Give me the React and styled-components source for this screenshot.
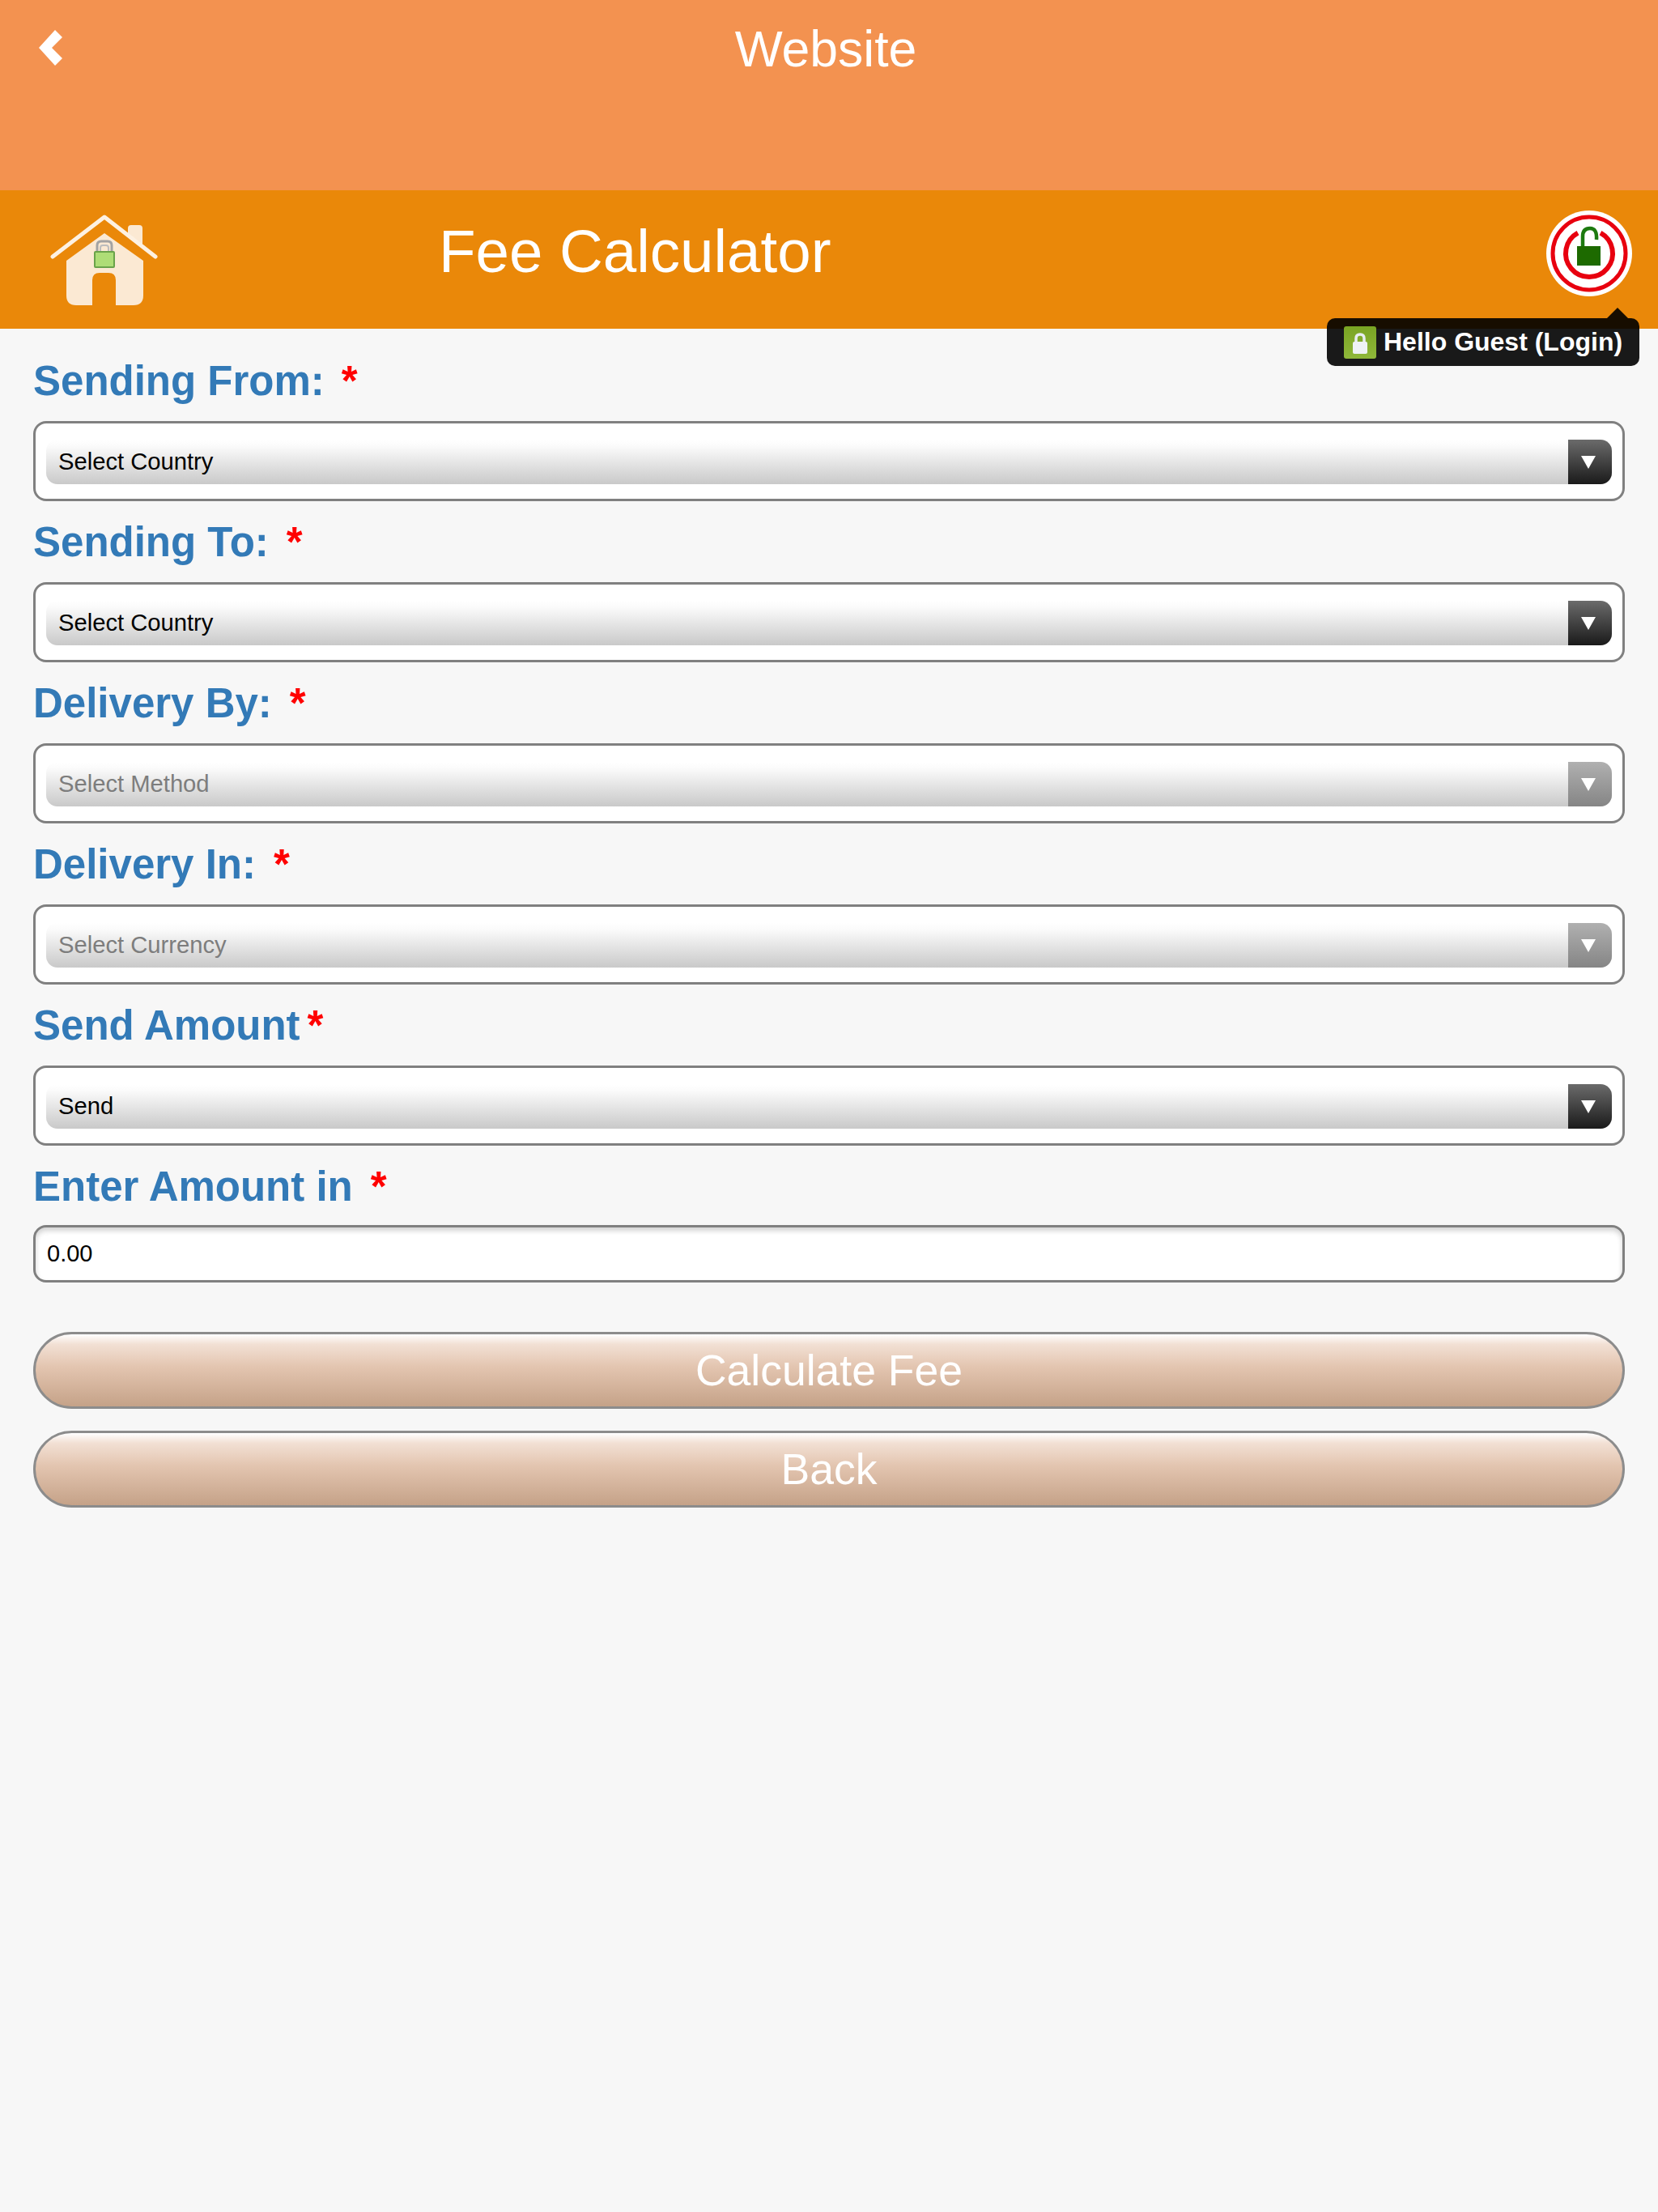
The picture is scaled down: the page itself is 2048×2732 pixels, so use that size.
import React from "react";
import styled, { createGlobalStyle } from "styled-components";

const GlobalStyle = createGlobalStyle`
  html, body {
    margin: 0;
    padding: 0;
    background: #f7f7f7;
  }
  body {
    font-family: "Liberation Sans", Arial, sans-serif;
  }
`;

const Page = styled.div`
  width: 2048px;
  min-height: 2732px;
  background: #f7f7f7;
  position: relative;
`;

const TopBar = styled.header`
  height: 235px;
  background: #f39250;
  display: flex;
  justify-content: center;
  position: relative;
  box-sizing: border-box;
  padding: 26px 8px 0 0;
`;

const BackButton = styled.svg`
  position: absolute;
  left: 48px;
  top: 37px;
  width: 30px;
  height: 44px;
`;

const SiteTitle = styled.div`
  font-size: 62.5px;
  line-height: 68px;
  color: #fff;
`;

const SubBar = styled.div`
  height: 171px;
  background: #ea8809;
  display: flex;
  align-items: flex-start;
  position: relative;
`;

const HomeIcon = styled.svg`
  width: 136px;
  height: 114px;
  margin: 30px 0 0 61px;
  flex: none;
`;

const PageTitle = styled.h1`
  margin: 0 0 0 345px;
  font-size: 74.5px;
  font-weight: normal;
  line-height: 86px;
  padding-top: 33px;
  color: #fff;
`;

const PowerIcon = styled.svg`
  position: absolute;
  left: 1909px;
  top: 24px;
  width: 108px;
  height: 108px;
`;

const Tooltip = styled.div`
  position: absolute;
  left: 1639px;
  top: 393px;
  width: 386px;
  height: 59px;
  box-sizing: border-box;
  padding-left: 21px;
  background: rgba(0, 0, 0, 0.9);
  border-radius: 10px;
  display: flex;
  align-items: center;
  gap: 9px;
  color: #fff;
  font-size: 32px;
  font-weight: bold;
  white-space: nowrap;

  &::before {
    content: "";
    position: absolute;
    right: 14px;
    top: -13px;
    border-left: 13px solid transparent;
    border-right: 13px solid transparent;
    border-bottom: 13px solid rgba(0, 0, 0, 0.9);
  }
`;

const TipLock = styled.svg`
  width: 40px;
  height: 40px;
  flex: none;
`;

const Form = styled.main`
  padding: 33px 41px 0;
`;

const Label = styled.label`
  display: block;
  height: 81px;
  line-height: 64px;
  font-size: 51px;
  font-weight: bold;
  color: #337ab7;
  white-space: pre;
`;

const Star = styled.span`
  color: #f00;
  margin-left: ${(p) => p.$gap}px;
`;

const SelectBox = styled.div`
  box-sizing: border-box;
  height: 99px;
  margin-bottom: 19px;
  padding: 20px 13px 18px;
  background: #fff;
  border: 3px solid #808080;
  border-radius: 16px;
`;

const SelectInner = styled.div`
  height: 55px;
  display: flex;
  align-items: center;
  justify-content: space-between;
  border-radius: 14px;
  background: linear-gradient(#fff 0%, #fbfbfb 14%, #c9c9c9 100%);
  overflow: hidden;
`;

const SelectText = styled.span`
  padding-left: 15px;
  font-size: 29.2px;
  color: ${(p) => (p.$disabled ? "#7d7d7d" : "#000")};
`;

const Arrow = styled.span`
  box-sizing: border-box;
  width: 54px;
  height: 100%;
  padding-right: 4px;
  flex: none;
  display: flex;
  align-items: center;
  justify-content: center;
  background: ${(p) =>
    p.$disabled
      ? "linear-gradient(#b0b0b0, #858585)"
      : "linear-gradient(#6b6b6b, #1a1a1a)"};

  &::after {
    content: "";
    border-left: 9px solid transparent;
    border-right: 9px solid transparent;
    border-top: 16px solid #fff;
  }
`;

const AmountInput = styled.div`
  box-sizing: border-box;
  height: 71px;
  margin: -2px 0 61px;
  padding-left: 14px;
  display: flex;
  align-items: center;
  font-size: 29px;
  color: #000;
  background: #fff;
  border: 3px solid #808080;
  border-radius: 16px;
  box-shadow: inset 0 4px 6px rgba(0, 0, 0, 0.18);
`;

const PillButton = styled.button`
  display: block;
  box-sizing: border-box;
  width: 100%;
  height: 95px;
  margin-bottom: 27px;
  padding: 0;
  font-family: inherit;
  font-size: 53.5px;
  color: #fff;
  border: 3px solid #8c8c8c;
  border-radius: 48px;
  background: linear-gradient(#fff 0%, #f2e0d4 14%, #e3c5b0 45%, #c5a288 100%);
`;

const fields = [
  { label: "Sending From:", gap: 21, value: "Select Country" },
  { label: "Sending To:", gap: 22, value: "Select Country" },
  { label: "Delivery By:", gap: 22, value: "Select Method", disabled: true },
  { label: "Delivery In:", gap: 22, value: "Select Currency", disabled: true },
  { label: "Send Amount", gap: 9, value: "Send" },
];

export default function App() {
  return (
    <Page>
      <GlobalStyle />
      <TopBar>
        <BackButton viewBox="0 0 30 44">
          <path d="M20 0 L29 9 L16 22 L29 35 L20 44 L0 22 Z" fill="#fff" />
        </BackButton>
        <SiteTitle>Website</SiteTitle>
      </TopBar>
      <SubBar>
        <HomeIcon viewBox="61 265 136 114">
          <path d="M158 291 V282 Q158 278 162 278 H172 Q176 278 176 282 V304 Z" fill="#fbe9d3" />
          <path
            d="M65 317 L129 268 L192 317"
            fill="none"
            stroke="#fdf1e2"
            strokeWidth="5"
            strokeLinecap="round"
            strokeLinejoin="round"
          />
          <path
            d="M82 322 L129 288 L177 322 V365 Q177 377 165 377 H143 V346 Q143 337 134 337 H123 Q114 337 114 346 V377 H94 Q82 377 82 365 Z"
            fill="#fbe9d3"
          />
          <path
            d="M120 311 V303 Q120 298 125 298 H133 Q138 298 138 303 V311"
            fill="none"
            stroke="#a3a3a3"
            strokeWidth="3"
          />
          <path
            d="M124 311 V306 Q124 303 127 303 H131 Q134 303 134 306 V311"
            fill="none"
            stroke="#bdbdbd"
            strokeWidth="2"
          />
          <rect x="117" y="311" width="24" height="19" rx="1" fill="#aedd76" stroke="#6aa34a" strokeWidth="2" />
        </HomeIcon>
        <PageTitle>Fee Calculator</PageTitle>
        <PowerIcon viewBox="0 0 108 108">
          <circle cx="54" cy="54" r="53" fill="#fff" />
          <circle cx="54" cy="54" r="45" fill="none" stroke="#e8000f" strokeWidth="5" />
          <path
            d="M40 28.6 A29 29 0 1 0 68 28.6"
            fill="none"
            stroke="#e8000f"
            strokeWidth="6"
          />
          <rect x="39" y="45" width="29" height="24" fill="#1d6a00" />
          <path
            d="M46 45 V33 Q46 23 55 23 Q64 23 63 37"
            fill="none"
            stroke="#1d7a10"
            strokeWidth="4.5"
          />
        </PowerIcon>
      </SubBar>
      <Tooltip>
        <TipLock viewBox="0 0 40 40">
          <defs>
            <linearGradient id="tipGreen" x1="0" y1="0" x2="0" y2="1">
              <stop offset="0" stopColor="#7aa423" />
              <stop offset="1" stopColor="#8fb83a" />
            </linearGradient>
          </defs>
          <rect width="40" height="40" rx="3" fill="url(#tipGreen)" />
          <path d="M15 20 V15 Q15 10 20 10 Q25 10 25 15 V20" fill="none" stroke="#e8edf0" strokeWidth="3.5" />
          <rect x="11" y="19" width="18" height="15" rx="2" fill="#eef2f5" />
        </TipLock>
        Hello Guest (Login)
      </Tooltip>
      <Form>
        {fields.map((f) => (
          <div key={f.label}>
            <Label>
              {f.label}
              <Star $gap={f.gap}>*</Star>
            </Label>
            <SelectBox>
              <SelectInner>
                <SelectText $disabled={f.disabled}>{f.value}</SelectText>
                <Arrow $disabled={f.disabled} />
              </SelectInner>
            </SelectBox>
          </div>
        ))}
        <div>
          <Label>
            Enter Amount in
            <Star $gap={22}>*</Star>
          </Label>
          <AmountInput>0.00</AmountInput>
        </div>
        <PillButton>Calculate Fee</PillButton>
        <PillButton>Back</PillButton>
      </Form>
    </Page>
  );
}
